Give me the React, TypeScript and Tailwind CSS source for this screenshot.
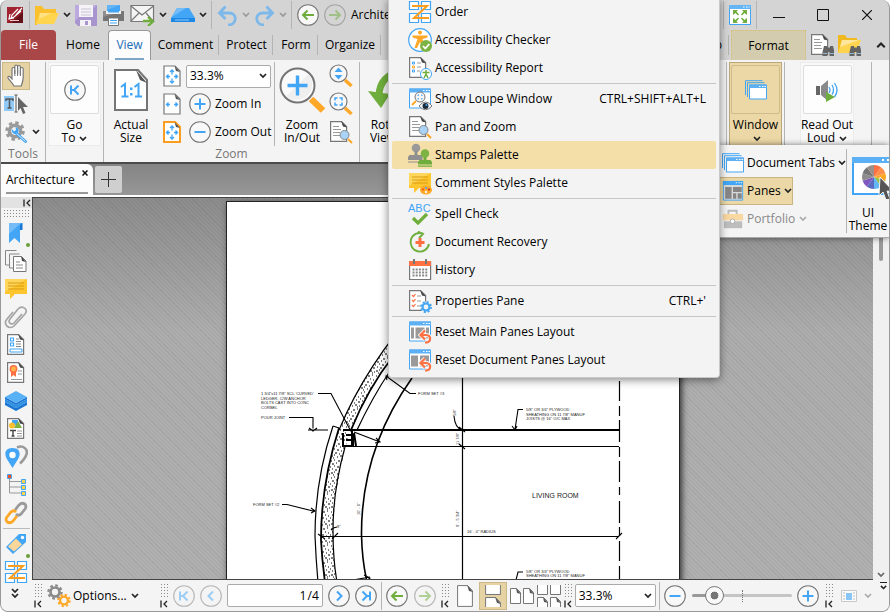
import React from 'react';

type IconProps = { className?: string };
type SvgProps = { className?: string; box?: string; children: React.ReactNode };

const BLUE = '#42a5f5';
const ORANGE = '#ffa726';
const GREEN = '#6fae3c';

function Svg({ className = 'size-6', box = '0 0 24 24', children }: SvgProps) {
    return (
        <svg viewBox={box} className={`block shrink-0 ${className}`} fill="none" aria-hidden="true">
            {children}
        </svg>
    );
}

/* ---------- small glyphs ---------- */

function Chevron({ className = 'w-2 text-[#222]' }: IconProps) {
    return (
        <Svg className={className} box="0 0 8 6">
            <path d="M1 1l3 3 3-3" stroke="currentColor" strokeWidth="1.7" />
        </Svg>
    );
}

function Collapse({ className = 'w-2' }: IconProps) {
    return (
        <Svg className={className} box="0 0 8 8">
            <path d="M1 0.5v7M7 1L4 4l3 3" stroke="#222" strokeWidth="1.3" />
        </Svg>
    );
}

function Grip() {
    return (
        <div className="flex h-full w-[10px] shrink-0 flex-col justify-between pt-[3px] pb-[3px]">
            <div className="h-[15px] w-[9px] bg-[radial-gradient(circle,#8a8a8a_0.7px,transparent_1px)] bg-[length:3px_3px]" />
            <Collapse />
        </div>
    );
}

type CircleProps = { kind: 'left' | 'right' | 'first' | 'prev' | 'next' | 'last' | 'plus' | 'minus'; color: string; faded?: boolean };

const circlePaths = {
    left: 'M17 11H6M10.500 6.500L6 11l4.500 4.500',
    right: 'M5 11h11M11.500 6.500L16 11l-4.500 4.500',
    first: 'M7 6.500v9M14.500 6.500L10 11l4.500 4.500M10 11H7',
    prev: 'M13 6.500L8.500 11l4.500 4.500',
    next: 'M9 6.500l4.500 4.500L9 15.500',
    last: 'M15 6.500v9M7.500 6.500L12 11l-4.500 4.500M12 11h3',
    plus: 'M11 5.500v11M5.500 11h11',
    minus: 'M5.500 11h11',
};

function Circle({ kind, color, faded }: CircleProps) {
    return (
        <Svg className="size-[22px]" box="0 0 22 22">
            <g opacity={faded ? 0.5 : 1}>
                <circle cx="11" cy="11" r="10.300" fill={faded ? 'none' : '#f8f8f8'} stroke="#777" strokeWidth="1.100" />
                <path d={circlePaths[kind]} stroke={color} strokeWidth="2" />
            </g>
        </Svg>
    );
}

/* ---------- title bar icons ---------- */

function LogoIcon() {
    return (
        <Svg className="size-[18px]" box="0 0 18 18">
            <path d="M1 1h16v16H1z" fill="#8e1a25" />
            <path d="M1 1h16L1 17z" fill="#a32431" />
            <path d="M17 6v11H6z" fill="#641018" />
            <path d="M16 2l-6 7M15 5l-7 6-3 1 1-3 6-6M4 8l-1 5 5-1" stroke="#fff" strokeWidth="1.200" />
            <path d="M4 14.500h9" stroke="#e8c6ca" />
        </Svg>
    );
}

function FolderIcon({ className = 'h-[22px] w-6' }: IconProps) {
    return (
        <Svg className={className} box="0 0 24 22">
            <path d="M0 2h7l2 3h12v4H6L2 21H0z" fill="#fbc02d" />
            <path d="M5 9h19l-5 11H1z" fill="#ffd54f" />
            <path d="M5 9h12L4 15z" fill="#ffe082" />
        </Svg>
    );
}

function SaveIcon() {
    return (
        <Svg className="size-[22px]" box="0 0 22 22">
            <path d="M0 1h22v21H3l-3-3z" fill="#a894cf" />
            <path d="M0 1h4v12L0 17zM18 1h4l-4 4z" fill="#bcaadf" />
            <path d="M4 1h14v12H4z" fill="#f5f3f8" />
            <path d="M6 5h10M6 8h10M6 11h10" stroke="#c9c4d4" />
            <path d="M5 16h11v6H5z" fill="#f3f1f6" />
            <path d="M10 17h3v4h-3z" fill="#a894cf" />
        </Svg>
    );
}

function PrintIcon() {
    return (
        <Svg className="h-[22px] w-[23px]" box="0 0 23 22">
            <path d="M5 1h13v6H5z" fill="#42a5f5" />
            <path d="M5 1h13L5 6z" fill="#64b5f6" />
            <path d="M1 7h21v10H1z" fill="#757575" />
            <path d="M1 7h21L1 13z" fill="#8e8e8e" />
            <path d="M4 7h15v3H4z" fill="#f2f2f2" />
            <path d="M6 7h11v1.500H6z" fill="#42a5f5" />
            <path d="M6.500 14h10v7.500h-10z" fill="#fff" stroke="#777" />
            <path d="M8 16.500h7M8 19h7" stroke={BLUE} />
        </Svg>
    );
}

function MailIcon() {
    return (
        <Svg className="h-[22px] w-[25px]" box="0 0 25 22">
            <path d="M1 1.500h22.500v16H1z" fill="#f4f4f4" stroke="#777" strokeWidth="1.200" />
            <path d="M1 2l11 9 11.500-9M1 17l8-8M23 17l-7-8" stroke="#777" strokeWidth="1.200" />
            <path d="M13 17h8M18 13l5 4.500-5 4.500" stroke={GREEN} strokeWidth="2.300" />
        </Svg>
    );
}

function ScannerIcon() {
    return (
        <Svg className="h-[18px] w-[24px]" box="0 0 24 18">
            <path d="M6 2h12l6 10H0z" fill={BLUE} />
            <path d="M6 2h9L1 11z" fill="#73bcf8" />
            <path d="M0 12h24v4H0z" fill="#1e88e5" />
            <path d="M4 14h14" stroke="#90caf9" />
        </Svg>
    );
}

function UndoIcon({ flip }: { flip?: boolean }) {
    return (
        <Svg className={flip ? 'size-[21px] -scale-x-100' : 'size-[21px]'} box="0 0 21 21">
            <path d="M2 8h10c9 0 8 12-1 12M8.500 1.500L2.500 8l6 6" stroke="#7db8ea" strokeWidth="2.800" />
        </Svg>
    );
}

function FullScreenIcon() {
    return (
        <Svg className="h-5 w-[22px]" box="0 0 22 20">
            <path d="M.5 1h21v18.500H.5z" fill="#fff" stroke={BLUE} />
            <path d="M0 0h22v4H0z" fill="#64b5f6" />
            <path d="M14 2h1.500M17 2h1.500M19.500 2h1" stroke="#fff" />
            <path d="M4 5h5L7.500 6.500 10 9.500l-1 1-2.500-2.500L4 10zM18 5h-5l1.500 1.500-2.500 3 1 1 2.500-2.500L18 10zM4 18h5l-1.500-1.500 2.500-3-1-1L6.500 15 4 13zM18 18h-5l1.500-1.500-2.500-3 1-1 2.500 2.500 2.500-2z" fill={GREEN} />
        </Svg>
    );
}

/* ---------- shared parts ---------- */

function PageShape({ lines = true }: { lines?: boolean }) {
    return (
        <>
            <path d="M1.600 1.600h11l5 5v14.800h-16z" fill="#fff" stroke="#777" strokeWidth="1.200" />
            <path d="M12 1l6 6.500-4-1z" fill="#444" />
            {lines && <path d="M4 6.500h6M4 9.500h8M4 12.500h7M4 15.500h8" stroke="#999" />}
        </>
    );
}

function WindowShape() {
    return (
        <>
            <path d="M1.500 2h21v19h-21z" fill="#fff" stroke={BLUE} />
            <path d="M1 1.500h22v4H1z" fill="#5cb0f5" />
            <path d="M15 3.500h1.500M18 3.500h1.500M20.500 3.500H22" stroke="#fff" />
        </>
    );
}

function Lens({ big }: { big?: boolean }) {
    if (big) {
        return (
            <>
                <circle cx="9.500" cy="9.500" r="8.500" fill="#f8f8f8" stroke="#777" strokeWidth="1.200" />
                <path d="M16 16l6.500 6" stroke={ORANGE} strokeWidth="3.400" />
            </>
        );
    }
    return (
        <>
            <circle cx="15.500" cy="15" r="4.500" fill="#a9d4f7" stroke="#888" />
            <path d="M19 19l4 4" stroke={ORANGE} strokeWidth="2" />
        </>
    );
}

function Gear({ x, y, r, color }: { x: number; y: number; r: number; color: string }) {
    return (
        <g transform={`translate(${x} ${y})`}>
            <circle r={r * 0.6} stroke={color} strokeWidth={r * 0.36} />
            <circle r={r * 0.88} stroke={color} strokeWidth={r * 0.3} strokeDasharray={`${r * 0.36} ${r * 0.331}`} />
        </g>
    );
}

function Binoculars() {
    return (
        <g>
            <path d="M14 13h3v1.500h3V13h3l1.500 6v4h-5v-4h-2v4h-5v-4z" fill="#636363" />
            <path d="M13 20.500h4M20 20.500h4" stroke="#8fb8d8" />
        </g>
    );
}

/* ---------- ribbon icons ---------- */

function HandIcon() {
    return (
        <Svg>
            <path d="M8 22c-2-4-5-6-6-8-.5-2 1.500-2.500 3 0l1 1V5c0-2 2.800-2 2.800 0v5V2.500c0-2 2.800-2 2.800 0V10 3c0-2 2.800-2 2.800 0v8-6c0-2 2.800-2 2.800 0v8c0 4-1 6-2 9z" transform="translate(2)" fill="#fff" stroke="#777" strokeWidth="1.200" />
            <path d="M10.800 6v6M13.600 4v8M16.400 6v6" stroke="#777" />
        </Svg>
    );
}

function TextSelectIcon() {
    return (
        <Svg>
            <path d="M0 4h10v15H0z" fill="#90caf9" />
            <path d="M2 7h7M5.500 7v9M3.500 16h4M2 6.500V9M9 6.500V9" stroke="#555" strokeWidth="1.500" />
            <path d="M12 3v17M10.500 3h3M10.500 20h3" stroke="#555" />
            <path d="M14 5l10 10h-5l2.500 6-2.500 1-2.500-6-2.500 3z" fill="#666" />
        </Svg>
    );
}

function ToolsIcon() {
    return (
        <Svg>
            <Gear x={10} y={11} r={9.5} color="#9a9a9a" />
            <path d="M11 13l9.500 8.500" stroke={BLUE} strokeWidth="3" strokeLinecap="round" />
            <path d="M11 13l9.500 8.500" stroke="#dceefd" />
            <path d="M7 9a3.500 3.500 0 103.500-2L11 10l-2 1.500z" fill={BLUE} />
        </Svg>
    );
}

function ActualSizeIcon() {
    return (
        <Svg className="h-[42px] w-[34px]" box="0 0 34 42">
            <path d="M1 1h23l9 10v30H1z" fill="#fff" stroke="#757575" strokeWidth="2" />
            <path d="M22 1l11 13-7-3z" fill="#555" />
            <path d="M7 18l4-3v12.500M7.500 27.500h7M20.500 18l4-3v12.500M21 27.500h7" stroke={BLUE} strokeWidth="2" />
            <path d="M16 18.500h2.500V21H16zM16 24h2.500v2.500H16z" fill={BLUE} />
        </Svg>
    );
}

function FitIcon({ kind }: { kind: 'page' | 'width' | 'visible' }) {
    const visible = kind === 'visible';
    return (
        <Svg className="h-[22px] w-[18px]" box="0 0 18 22">
            <path d="M1 1h11l5 5v15H1z" fill="#fff" stroke={visible ? '#fb9d1e' : '#777'} strokeWidth={visible ? 2 : 1.2} />
            <path d="M11.500 1L17 7l-4-1z" fill="#555" />
            <path d="M7 11.500H3M5.500 9.500l-2 2 2 2M11 11.500h4M12.500 9.500l2 2-2 2" stroke={BLUE} strokeWidth="1.300" />
            {kind !== 'width' && <path d="M9 9.500v-4M7 7l2-2 2 2M9 13.500v4M7 16l2 2 2-2" stroke={BLUE} strokeWidth="1.300" />}
        </Svg>
    );
}

function ZoomBigIcon() {
    return (
        <Svg className="size-[46px]" box="0 0 46 46">
            <circle cx="18.500" cy="18.500" r="17" fill="#fafafa" stroke="#757575" strokeWidth="2" />
            <path d="M7 29.500A16 16 0 0029.500 7z" fill="#efefef" />
            <path d="M18.500 8.500v20M8.500 18.500h20" stroke={BLUE} strokeWidth="3.400" />
            <path d="M32 32l12 11.500" stroke={ORANGE} strokeWidth="6.500" />
        </Svg>
    );
}

function ZoomUpDownIcon() {
    return (
        <Svg>
            <Lens big />
            <path d="M9.500 3.500l4 4.500h-8zM9.500 15.500l4-4.500h-8z" fill={BLUE} />
        </Svg>
    );
}

function ZoomAreaIcon() {
    return (
        <Svg>
            <Lens big />
            <path d="M6 8.500V6h2.500M10.500 6H13v2.500M13 10.500V13h-2.500M8.500 13H6v-2.500" stroke={BLUE} strokeWidth="1.500" />
        </Svg>
    );
}

function PanZoomIcon() {
    return (
        <Svg>
            <PageShape />
            <Lens />
        </Svg>
    );
}

function RotateIcon() {
    return (
        <Svg className="h-[46px] w-[44px]" box="0 0 44 46">
            <path d="M12 29C12 15 21 6 34 5" stroke={GREEN} strokeWidth="7" />
            <path d="M1 24l22 3-9 14z" fill={GREEN} />
        </Svg>
    );
}

function WindowsIcon() {
    return (
        <Svg className="size-[22px]" box="0 0 22 20">
            <path d="M.5 15V.7h17M2.500 17V2.700h17" stroke={BLUE} />
            <path d="M4.500 5h17v14h-17z" fill="#fff" stroke={BLUE} />
            <path d="M4 4.500h18V8H4z" fill="#5cb0f5" />
            <path d="M14 6.500h1.500M17 6.500h1.500M19.500 6.500H21" stroke="#fff" />
        </Svg>
    );
}

function SpeakerIcon() {
    return (
        <Svg>
            <path d="M1 8h4v9H1z" fill="#666" />
            <path d="M6 8l7-6v21l-7-6z" fill="#8a8a8a" />
            <path d="M14 9q2 3 0 6M17 7q3 5 0 9.500M19.500 5q5 7.500 0 14" stroke={BLUE} strokeWidth="1.300" />
            <path d="M11 14l9 5-9 5z" fill={GREEN} />
        </Svg>
    );
}

function FindDocIcon() {
    return (
        <Svg>
            <PageShape />
            <Binoculars />
        </Svg>
    );
}

function FindFolderIcon() {
    return (
        <Svg>
            <path d="M1 2h7l2 3h10v4H6L2 20H1z" fill="#f0b91f" />
            <path d="M5 7h19l-5 13H1z" fill="#ffd54f" />
            <path d="M5 7h17L3 14z" fill="#ffe69a" />
            <Binoculars />
        </Svg>
    );
}

function PanesIcon() {
    return (
        <Svg className="size-[22px]">
            <path d="M1.500 2h21v20h-21z" fill="#d9d9d9" stroke={BLUE} />
            <path d="M1 1h22v4.500H1z" fill={BLUE} />
            <path d="M15 3h1.500M18 3h1.500M20.500 3H22" stroke="#fff" />
            <path d="M3.500 7.500h7v13h-7zM12 7.500h9.500v5.500H12zM12 14.500h3.500v6H12zM17 14.500h4.500v6H17z" fill="#858585" />
        </Svg>
    );
}

function PortfolioIcon() {
    return (
        <Svg className="size-[22px]">
            <path d="M7 7V3h9v4" stroke="#bbb" strokeWidth="2" />
            <path d="M1 6.500h22V14H1z" fill="#f9d8a2" />
            <path d="M2 14h20v8H2z" fill="#bdbdbd" />
            <path d="M1 14h22" stroke="#f5f5f5" />
            <circle cx="11.500" cy="14.500" r="2.500" fill="#fff" stroke="#aaa" />
        </Svg>
    );
}

function ThemeIcon() {
    const wedges = ['#ff7043', '#ff8f4a', '#ffa726', '#8bc34a', '#64b5f6', '#5c6bc0', '#7e57c2', '#8d8d8d', '#757575', '#9b8f8a'];
    return (
        <Svg className="h-[42px] w-11" box="0 0 44 42">
            <path d="M1 1h44v36H1z" fill="#fff" stroke={BLUE} strokeWidth="2" />
            <path d="M0 0h44v6H0z" fill="#5cb0f5" />
            <path d="M30 3h2M35 3h2M40 3h2" stroke="#fff" strokeWidth="2" />
            {wedges.map((color, i) => (
                <path key={color} d="M22 20V8a12 12 0 017.100 2.300z" fill={color} transform={`rotate(${i * 36} 22 20)`} />
            ))}
            <path d="M28 20l14 15-7-1 3 8-4 1-3-8-4 4z" fill="#555" stroke="#f5f5f5" />
        </Svg>
    );
}

/* ---------- menu and side bar icons ---------- */

function OrderIcon() {
    return (
        <Svg>
            <path d="M1.500 1.500h9v8h-9zM13.500 1.500h9v8h-9zM1.500 13.500h9v9h-9zM13.500 13.500h9v9h-9z" fill="#fff" stroke={BLUE} strokeWidth="1.200" />
            <path d="M4 6h15L6 18h15" stroke="#fb9d1e" strokeWidth="2" />
        </Svg>
    );
}

function AccessCheckIcon() {
    return (
        <Svg>
            <circle cx="12" cy="12" r="11.300" fill="#fff" stroke={BLUE} strokeWidth="1.200" />
            <circle cx="12" cy="4.500" r="2" fill={ORANGE} />
            <path d="M4.500 7.500h15v2l-5 1.500 3 9H15L12 14l-3 6H6.500l3-9-5-1.500z" fill={ORANGE} />
            <circle cx="18" cy="18" r="6" fill="#7cb342" />
            <path d="M15 18l2.300 2.500 4-4.500" stroke="#fff" strokeWidth="1.800" />
        </Svg>
    );
}

function AccessReportIcon() {
    return (
        <Svg>
            <PageShape lines={false} />
            <path d="M4.500 6h2v2h-2zM4.500 14h2v2h-2z" stroke={BLUE} />
            <path d="M4.500 10h2v2h-2z" stroke={ORANGE} />
            <path d="M9 7h4M9 11h4M9 15h3" stroke="#999" />
            <circle cx="18" cy="18" r="5.500" fill="#fff" stroke={BLUE} />
            <path d="M14.500 16.500h7M18 14v5M18 18l-2 4M18 18l2 4" stroke={GREEN} strokeWidth="1.500" />
        </Svg>
    );
}

function LoupeIcon() {
    return (
        <Svg>
            <WindowShape />
            <circle cx="12" cy="10" r="5" fill="#f5f5f5" stroke="#777" />
            <path d="M10 9V8h1M13 8h1v1M14 11v1h-1M11 12h-1v-1" stroke={BLUE} />
            <path d="M8 14l-4 4" stroke={ORANGE} strokeWidth="2" />
            <path d="M11 19q6.500-8 13 0-6.500 7.500-13 0z" fill="#fff" stroke="#777" />
            <circle cx="17.500" cy="19" r="3" fill="#1b2a3a" />
            <circle cx="18.500" cy="18" r="1" fill={BLUE} />
        </Svg>
    );
}

function StampsIcon() {
    return (
        <Svg>
            <circle cx="8" cy="5" r="4.300" fill="#999" />
            <path d="M6.500 8h3v4h5v5H0v-3l1.500-2h5zM0 18.500h13v1H0z" fill="#909090" />
            <circle cx="17" cy="10.500" r="4.300" fill="#7cb342" />
            <path d="M15.500 14h3v3h4l1.500 2v2.500H10V19l1.500-2h4zM10 22.500h14v1.200H10z" fill="#6fae3c" />
        </Svg>
    );
}

function CommentIcon({ palette }: { palette?: boolean }) {
    return (
        <Svg>
            <path d="M1 2h22v15H11l-5 5v-5H1z" fill="#fdc52e" />
            <path d="M1 2h22L1 15z" fill="#ffd65c" />
            <path d="M4 6h16M4 9h16M4 12h16" stroke="#d99b13" />
            {palette && (
                <>
                    <ellipse cx="18" cy="19" rx="6" ry="4.500" fill={ORANGE} />
                    <circle cx="15" cy="18.500" r="1.100" fill="#f4511e" />
                    <circle cx="18" cy="17" r="1.100" fill={BLUE} />
                    <circle cx="21" cy="18.500" r="1.100" fill="#c62828" />
                    <circle cx="18" cy="21" r="1.200" fill="#f3f3f3" />
                </>
            )}
        </Svg>
    );
}

function SpellIcon() {
    return (
        <Svg>
            <text x="0" y="10" fontSize="11" fill={BLUE} fontFamily="Liberation Sans, Arial, sans-serif">ABC</text>
            <path d="M5 16l5 5 9-9" stroke={GREEN} strokeWidth="3.200" />
        </Svg>
    );
}

function RecoveryIcon() {
    return (
        <Svg>
            <path d="M15 3.500A9.300 9.300 0 1021 14M10 1.500L15 4l-4 4" stroke={GREEN} strokeWidth="1.900" />
            <path d="M12 8v9M7.500 12.500h9" stroke="#ff6e40" strokeWidth="3" />
        </Svg>
    );
}

function HistoryIcon() {
    return (
        <Svg>
            <path d="M1.600 4h21v17.500h-21z" fill="#fff" stroke="#777" strokeWidth="1.200" />
            <path d="M1 3h22v5H1z" fill="#ff7043" />
            <path d="M6 1v5M18 1v5" stroke="#777" strokeWidth="2" />
            <path d="M4.500 11.500h15M4.500 14.500h15M4.500 17.500h15" stroke="#888" strokeWidth="1.800" strokeDasharray="2 1.200" />
        </Svg>
    );
}

function PropertiesIcon() {
    return (
        <Svg>
            <PageShape lines={false} />
            <path d="M4 6l1.500 1.500L7.500 5M4 11l1.500 1.500L7.500 10M4 16l1.500 1.500L7.500 15" stroke="#ff7043" strokeWidth="1.200" />
            <path d="M9 7h4M9 12h4M9 17h3" stroke="#999" />
            <circle cx="18" cy="18" r="5.500" fill="#f3f3f3" />
            <Gear x={18} y={18} r={5.8} color={BLUE} />
        </Svg>
    );
}

function ResetIcon({ wide }: { wide?: boolean }) {
    return (
        <Svg>
            <WindowShape />
            <path d={wide ? 'M3 7.500h7v11H3zM12 7.500h9v11h-9z' : 'M3 7.500h3v11H3zM7.500 7.500h9v11h-9zM18 7.500h3v11h-3z'} fill="#9a9a9a" />
            <path d="M13 15h5c6 0 5 7.500 0 7.500h-1M17 10.500L12.500 15l4.500 4.500" stroke="#f3f3f3" strokeWidth="4" />
            <path d="M13 15h5c6 0 5 7.500 0 7.500h-1M17 10.500L12.500 15l4.500 4.500" stroke="#ff7043" strokeWidth="2.200" />
        </Svg>
    );
}

function BookmarkIcon() {
    return (
        <Svg>
            <path d="M15 2h3.500v7H15z" fill="#1976d2" />
            <path d="M5 2h13l-2 2v18l-5.500-5L5 22z" fill={BLUE} />
            <path d="M5 2h12L5 13z" fill="#73bcf8" />
        </Svg>
    );
}

function PagesIcon() {
    return (
        <Svg>
            <path d="M1.500 16V1.500h11M1.500 16H5M5.500 19V5h10M5.500 19H9" stroke="#888" />
            <path d="M9.500 7.500h8l4.500 4.500v10.500H9.500z" fill="#fff" stroke="#777" />
            <path d="M17 7l5 6-4-1z" fill="#444" />
            <path d="M12 13h4M12 16h7M12 19h7" stroke="#888" />
        </Svg>
    );
}

function ClipIcon() {
    return (
        <Svg>
            <path d="M9 7l-6 7c-5 6 3 11 7 7L21 9c4-5-3-9-7-5L6 14c-3 4 2 6 4 4l8-9" stroke="#a5a5a5" strokeWidth="1.700" />
        </Svg>
    );
}

function FieldsIcon() {
    return (
        <Svg>
            <g transform="translate(2)">
                <PageShape lines={false} />
                <path d="M4.500 5h3v3h-3zM4.500 10h3v3h-3z" stroke={BLUE} strokeWidth="1.200" />
                <path d="M10 6h3M10 8.500h5M10 11h5M10 13.500h5" stroke="#888" />
                <path d="M4 16h12v3H4z" stroke={BLUE} />
            </g>
        </Svg>
    );
}

function CertIcon() {
    return (
        <Svg>
            <g transform="translate(2)">
                <PageShape lines={false} />
                <path d="M5 9h5v7l-2.500-2L5 16z" fill="#ff7043" />
                <circle cx="7.500" cy="8" r="3.200" fill="#ffb74d" stroke="#ff7043" strokeWidth="1.500" />
                <path d="M12 10h4M12 13h4M5 18.500h11" stroke="#999" />
            </g>
        </Svg>
    );
}

function LayersIcon() {
    return (
        <Svg>
            <path d="M1 13l11 6 11-6v3l-11 6-11-6z" fill="#1976d2" />
            <path d="M1 10l11 6 11-6v3l-11 6-11-6z" fill="#2f8fe2" />
            <path d="M1 8l11 6 11-6v2l-11 6-11-6z" fill="#1976d2" />
            <path d="M12 2l11 6-11 6L1 8z" fill="#58b0f5" />
        </Svg>
    );
}

function ContentIcon() {
    return (
        <Svg>
            <g transform="translate(2)">
                <PageShape lines={false} />
                <path d="M6 3h6v5H6z" fill={BLUE} />
                <circle cx="6" cy="8.500" r="3" fill="#fbc02d" />
                <path d="M12 4l4 7H8z" fill="#7cb342" />
                <path d="M4 13.500h6M7 13.500V19M5.500 19h3" stroke="#444" strokeWidth="1.400" />
                <path d="M11 14h5M11 16.500h5M11 19h5" stroke="#999" />
            </g>
        </Svg>
    );
}

function PinsIcon() {
    return (
        <Svg>
            <path d="M13 2.500c6-3 12 2 9 8-1 3-4 6-6 8" stroke="#9a9a9a" strokeWidth="2.600" />
            <path d="M8.500 3c9 0 8 8 5 12l-5 8-5-8C.5 11-.5 3 8.500 3z" fill={BLUE} />
            <circle cx="8.500" cy="10" r="3.200" fill="#fff" />
        </Svg>
    );
}

function TreeIcon() {
    return (
        <Svg>
            <path d="M5.500 5v15H17M5.500 8.500H17M5.500 14H17" stroke="#999" />
            <path d="M3.500 1.500h4v4h-4z" fill="#f4511e" stroke={BLUE} />
            <path d="M17.500 6.500h4v4h-4zM17.500 12.500h4v4h-4zM17.500 18.500h4v4h-4z" fill="#ffd54f" stroke={BLUE} />
        </Svg>
    );
}

function LinkIcon() {
    return (
        <Svg>
            <path d="M11 9l4-5c4-4 9 0 6 4l-4 5c-2 2-4 1-5 0" stroke="#9a9a9a" strokeWidth="2.800" />
            <path d="M13 15l-4 5c-4 4-9 0-6-4l4-5c2-2 4-1 5 0" stroke={ORANGE} strokeWidth="2.800" />
        </Svg>
    );
}

function TagIcon() {
    return (
        <Svg>
            <path d="M15 2h7v8L9 22 2 15z" fill={BLUE} />
            <path d="M12 6.500l6 6-8 7-6-5z" fill="#ffd79b" />
            <circle cx="18.500" cy="5.500" r="1.700" fill="#fff" />
        </Svg>
    );
}

function GearsIcon() {
    return (
        <Svg>
            <Gear x={8} y={8} r={7.5} color="#8a8a8a" />
            <Gear x={17} y={16.5} r={6.5} color={ORANGE} />
        </Svg>
    );
}

/* ---------- data ---------- */

type MenuItem = { label: string; icon: React.ReactNode; keys?: string; active?: boolean };

const menuGroups: MenuItem[][] = [
    [
        { label: 'Order', icon: <OrderIcon /> },
        { label: 'Accessibility Checker', icon: <AccessCheckIcon /> },
        { label: 'Accessibility Report', icon: <AccessReportIcon /> },
    ],
    [
        { label: 'Show Loupe Window', icon: <LoupeIcon />, keys: 'CTRL+SHIFT+ALT+L' },
        { label: 'Pan and Zoom', icon: <PanZoomIcon /> },
        { label: 'Stamps Palette', icon: <StampsIcon />, active: true },
        { label: 'Comment Styles Palette', icon: <CommentIcon palette /> },
    ],
    [
        { label: 'Spell Check', icon: <SpellIcon /> },
        { label: 'Document Recovery', icon: <RecoveryIcon /> },
        { label: 'History', icon: <HistoryIcon /> },
    ],
    [{ label: 'Properties Pane', icon: <PropertiesIcon />, keys: "CTRL+'" }],
    [
        { label: 'Reset Main Panes Layout', icon: <ResetIcon /> },
        { label: 'Reset Document Panes Layout', icon: <ResetIcon wide /> },
    ],
];

const sidePanes = [
    { label: 'Bookmarks', icon: <BookmarkIcon />, dot: true },
    { label: 'Thumbnails', icon: <PagesIcon /> },
    { label: 'Comments', icon: <CommentIcon /> },
    { label: 'Attachments', icon: <ClipIcon /> },
    { label: 'Fields', icon: <FieldsIcon /> },
    { label: 'Signatures', icon: <CertIcon /> },
    { label: 'Layers', icon: <LayersIcon /> },
    { label: 'Content', icon: <ContentIcon /> },
    { label: 'Destinations', icon: <PinsIcon /> },
    { label: 'Structure', icon: <TreeIcon /> },
    { label: 'Links', icon: <LinkIcon /> },
];

const ribbonTabs = [
    { label: 'Comment', width: 'w-[68px]' },
    { label: 'Protect', width: 'w-[54px]' },
    { label: 'Form', width: 'w-[45px]' },
    { label: 'Organize', width: 'w-[63px]' },
];

/* ---------- page parts ---------- */

function Sep({ className = 'h-7' }: IconProps) {
    return <div className={`w-px shrink-0 bg-[#b4b4b4] ${className}`} />;
}

function TitleBar() {
    return (
        <header className="flex h-[30px] shrink-0 items-center">
            <div className="flex items-center gap-[5px] pl-[5px]">
                <LogoIcon />
                <Sep />
                <button aria-label="Open"><FolderIcon /></button>
                <Chevron className="-mx-px w-2 text-[#222]" />
                <button aria-label="Save"><SaveIcon /></button>
                <button aria-label="Print"><PrintIcon /></button>
                <button aria-label="Email"><MailIcon /></button>
                <Chevron className="-mx-px w-2 text-[#222]" />
                <button aria-label="Scan"><ScannerIcon /></button>
                <Chevron className="-mx-px w-2 text-[#222]" />
                <Sep />
                <button aria-label="Undo"><UndoIcon /></button>
                <Chevron className="-mx-px w-2 text-[#999]" />
                <button aria-label="Redo"><UndoIcon flip /></button>
                <Chevron className="-mx-px w-2 text-[#999]" />
                <Sep />
                <button aria-label="Back"><Circle kind="left" color={GREEN} /></button>
                <button aria-label="Forward"><Circle kind="right" color={GREEN} faded /></button>
                <span>Architecture</span>
            </div>
            <div className="ml-auto flex items-center">
                <Chevron className="mr-[3px] w-2 text-[#222]" />
                <Sep />
                <button className="px-[5px]" aria-label="Full screen"><FullScreenIcon /></button>
                <Sep />
                <button className="flex h-7 w-11 items-center justify-center" aria-label="Minimize">
                    <Svg className="size-3" box="0 0 12 12"><path d="M0 8.500h12" stroke="#111" /></Svg>
                </button>
                <button className="flex h-7 w-11 items-center justify-center" aria-label="Maximize">
                    <Svg className="size-3" box="0 0 12 12"><path d="M.5.5h11v11H.5z" stroke="#111" /></Svg>
                </button>
                <button className="flex h-7 w-11 items-center justify-center" aria-label="Close">
                    <Svg className="size-[10px]" box="0 0 10 10"><path d="M0 0l10 10M10 0L0 10" stroke="#111" strokeWidth="1.200" /></Svg>
                </button>
            </div>
        </header>
    );
}

function TabBar() {
    return (
        <nav className="flex h-[30px] shrink-0 items-stretch">
            <button className="w-[55px] rounded-t bg-[#a94648] text-white">File</button>
            <button className="w-[52px] pl-[2px]">Home</button>
            <button className="w-[43px] rounded-t border border-b-0 border-[#999] bg-[#fcfcfc] px-[6px] text-[#1a6fb8]">
                <span className="flex h-full items-center justify-center border-b-2 border-[#7fa6c4]">View</span>
            </button>
            {ribbonTabs.map((tab) => (
                <div key={tab.label} className={`flex items-center ${tab.width}`}>
                    <button className="flex-1 pl-[2px] text-center">{tab.label}</button>
                    {tab.label !== 'Comment' || <Sep className="h-5" />}
                    {tab.label === 'Comment' || <Sep className="h-5" />}
                </div>
            ))}
            <div className="ml-auto flex items-center">
                <button className="pr-[6px]">Help</button>
                <Sep className="mr-[2px] h-5" />
                <button className="h-full w-[75px] border-x border-t border-dotted border-[#d8bd6e] bg-[#d3ccae]">Format</button>
                <button className="ml-[3px] w-7 pl-[1px]" aria-label="Find in document"><FindDocIcon /></button>
                <button className="w-7" aria-label="Find in folder"><FindFolderIcon /></button>
                <button className="w-6 pl-[11px]" aria-label="Collapse ribbon">
                    <Chevron className="w-[10px] rotate-180 text-[#222]" />
                </button>
            </div>
        </nav>
    );
}

type BigProps = { label: React.ReactNode; icon: React.ReactNode; className: string; framed?: boolean; on?: boolean };

function BigButton({ label, icon, className, framed, on }: BigProps) {
    const look = on ? 'border-[#b9a67a] bg-[#ecd8a6]' : framed ? 'border-[#ececec] bg-[#f9f9f9]' : 'border-transparent';
    const frame = on ? 'border border-[#d0bc8a]' : framed ? 'border border-[#ddd] bg-[#fdfdfd]' : '';
    return (
        <button className={`flex h-[84px] shrink-0 flex-col items-center border ${look} ${className}`}>
            <span className={`mt-[2px] mb-1 flex h-[49px] w-[49px] shrink-0 items-center justify-center rounded-xs ${frame}`}>{icon}</span>
            <span className="leading-[13px] whitespace-nowrap">{label}</span>
        </button>
    );
}

function InlineArrow() {
    return <Chevron className="ml-1 inline-block w-2 text-[#222]" />;
}

function SelectBox({ label, className }: { label: string; className: string }) {
    return (
        <div className={`relative flex items-center ${className}`}>
            <select aria-label={label} defaultValue="33.3%" className="h-full w-full appearance-none rounded-xs border border-[#aaa] bg-white pl-[3px] text-xs">
                <option>33.3%</option>
                <option>100%</option>
            </select>
            <div className="pointer-events-none absolute right-1"><Chevron /></div>
        </div>
    );
}

function Ribbon() {
    return (
        <div className="flex h-[102px] shrink-0 bg-[#f4f4f4] pt-[2px]">
            <section className="flex w-11 flex-col">
                <button className="ml-px flex size-7 items-center justify-center border border-[#cdb988] bg-[#e6d3a3]" aria-label="Hand"><HandIcon /></button>
                <button className="ml-[3px] flex h-7 items-center" aria-label="Select text"><TextSelectIcon /></button>
                <button className="ml-1 flex h-7 items-center gap-[3px]" aria-label="Other tools">
                    <ToolsIcon />
                    <Chevron />
                </button>
                <h2 className="text-center text-[#777]">Tools</h2>
            </section>
            <Sep className="h-full" />
            <BigButton label={<>Go<br />To<InlineArrow /></>} framed className="mx-[2px] w-[53px]" icon={<Circle kind="first" color={BLUE} />} />
            <Sep className="h-full" />
            <section className="flex w-[255px] flex-col">
                <div className="flex h-[84px]">
                    <BigButton label={<>Actual<br />Size</>} className="w-[54px]" icon={<ActualSizeIcon />} />
                    <div className="flex w-7 flex-col items-center">
                        <button className="flex h-7 items-center" aria-label="Fit page"><FitIcon kind="page" /></button>
                        <button className="flex h-7 items-center" aria-label="Fit width"><FitIcon kind="width" /></button>
                        <button className="flex h-7 items-center" aria-label="Fit visible"><FitIcon kind="visible" /></button>
                    </div>
                    <div className="flex w-[88px] flex-col">
                        <div className="flex h-7 items-center"><SelectBox label="Zoom level" className="h-[23px] w-[85px]" /></div>
                        <button className="flex h-7 items-center gap-1 pl-[3px] whitespace-nowrap"><Circle kind="plus" color={BLUE} />Zoom In</button>
                        <button className="flex h-7 items-center gap-1 pl-[3px] whitespace-nowrap"><Circle kind="minus" color={BLUE} />Zoom Out</button>
                    </div>
                    <Sep className="h-full" />
                    <BigButton label={<>Zoom<br />In/Out</>} className="w-[54px]" icon={<ZoomBigIcon />} />
                    <div className="flex flex-col">
                        <button className="flex h-7 items-center" aria-label="Dynamic zoom"><ZoomUpDownIcon /></button>
                        <button className="flex h-7 items-center" aria-label="Marquee zoom"><ZoomAreaIcon /></button>
                        <button className="flex h-7 items-center" aria-label="Pan and zoom"><PanZoomIcon /></button>
                    </div>
                </div>
                <h2 className="text-center text-[#777]">Zoom</h2>
            </section>
            <Sep className="h-full" />
            <BigButton label={<>Rotate<br />View<InlineArrow /></>} className="w-[58px]" icon={<RotateIcon />} />
            <div className="ml-auto flex">
                <Sep className="h-full" />
                <BigButton label={<>Window<br /><InlineArrow /></>} framed on className="mx-[2px] w-[53px]" icon={<WindowsIcon />} />
                <Sep className="h-full" />
                <BigButton label={<>Read Out<br />Loud<InlineArrow /></>} framed className="mr-[17px] ml-[15px] w-[54px]" icon={<SpeakerIcon />} />
                <Sep className="h-full" />
                <div className="w-[17px]" />
            </div>
        </div>
    );
}

function DocumentTabs() {
    return (
        <div className="flex h-[35px] shrink-0 gap-[2px] border-t-2 border-b-2 border-t-[#4a4a4a] border-b-white bg-linear-to-b from-[#848484] to-[#979797]">
            <div className="relative flex w-[92px] flex-col justify-end rounded-tr-md bg-[#fcfcfc] px-[5px] pb-px">
                <a href="#architecture" className="pb-1 whitespace-nowrap">Architecture</a>
                <div className="h-[2px] bg-[#999]" />
                <button aria-label="Close tab" className="absolute top-[6px] right-[5px]">
                    <Svg className="size-[6px]" box="0 0 6 6"><path d="M.5.5l5 5M5.500.5l-5 5" stroke="#111" strokeWidth="1.500" /></Svg>
                </button>
            </div>
            <button aria-label="New tab" className="mt-[2px] flex h-[27px] w-[27px] items-center justify-center rounded-xs bg-[#cfcfcf]">
                <Svg className="size-[15px]" box="0 0 15 15"><path d="M7.500 0v15M0 7.500h15" stroke="#333" /></Svg>
            </button>
        </div>
    );
}

function SideBar() {
    return (
        <aside className="flex w-[31px] shrink-0 flex-col overflow-hidden bg-[#f4f4f4]">
            <div className="flex h-[11px] shrink-0 items-center justify-end bg-[#e2e2e2] pr-px"><Collapse /></div>
            <div className="mx-[2px] mt-px mb-px h-[9px] shrink-0 bg-[radial-gradient(circle,#8a8a8a_0.7px,transparent_1px)] bg-[length:3px_3px]" />
            {sidePanes.map((pane) => (
                <button key={pane.label} aria-label={pane.label} className="relative flex h-7 shrink-0 items-center pl-[3px]">
                    {pane.icon}
                    {pane.dot && <i className="absolute right-[2px] bottom-0 size-1 rounded-full bg-[#689f38]" />}
                </button>
            ))}
            <div className="mx-[2px] my-px h-px shrink-0 bg-[#bbb]" />
            <button aria-label="Properties" className="relative flex h-7 shrink-0 items-center pl-[3px]">
                <TagIcon />
                <i className="absolute right-[2px] bottom-0 size-1 rounded-full bg-[#689f38]" />
            </button>
            <button aria-label="Order" className="flex h-7 shrink-0 items-center pl-[3px]"><OrderIcon /></button>
            <button aria-label="More panes" className="flex flex-col items-center pt-[2px] pr-1">
                <Chevron className="w-2 text-[#222]" />
                <Chevron className="-mt-px w-2 text-[#222]" />
            </button>
        </aside>
    );
}

function Drawing() {
    return (
        <svg viewBox="227 202 452 384" className="block h-[384px] w-[452px]" fill="none" stroke="#000">
            <defs>
                <pattern id="concrete" width="15" height="17" patternUnits="userSpaceOnUse">
                    <path d="M1 2h1M4 1h1M8 2h2M12 1h1M2 5h2M6 4h1M10 5h1M13 6h1M0 8h1M4 7h1M7 8h2M11 9h1M2 10h1M5 11h2M9 12h1M13 11h2M1 14h2M4 13h1M7 15h1M10 14h2M14 15h1M3 16h1M12 16h1" stroke="#000" strokeWidth="1.200" />
                </pattern>
            </defs>
            <path d="M420 305Q366 365 339 430L351 430Q368 388 394 355Z" fill="url(#concrete)" stroke="none" />
            <path d="M339 428Q321 484 321 540Q322 560 325 582L337 582Q333 560 333 530Q335 485 349 434Z" fill="url(#concrete)" stroke="none" />
            <g strokeWidth="1.200">
                <path d="M420 305Q366 365 339 430" />
                <path d="M394 355Q368 388 351 430" strokeWidth="1.800" />
                <path d="M390 371Q372 398 357 430" />
                <path d="M333 426Q315 480 315 536Q316 560 318 582" />
                <path d="M339 428Q321 484 321 540Q322 560 325 582" strokeWidth="1.800" />
                <path d="M345 447Q333 490 333 530Q333 560 337 582" />
                <path d="M333 426l6 2" />
                <path d="M412 378Q361 450 361.500 535Q362 560 367 582" strokeWidth="1.600" />
            </g>
            <path d="M343 430h276" strokeWidth="2" />
            <path d="M343 446.500h276M321 536.500h298M462.500 360v226" strokeWidth="1.200" />
            <path d="M619.500 381v20M619.500 406v10M619.500 420v22M619.500 447v10M619.500 461v21M619.500 487v8M619.500 501v22M619.500 527v9M619.500 541v20M619.500 566v14" strokeWidth="1.200" />
            <g strokeWidth="1.100">
                <path d="M318 393.500h13l20 38M289 417.500h24v11M308 430h20M309 428l4 3 4-3" />
                <path d="M282 504.500h5l28 7M311 508l4 3-4 2" />
                <path d="M416 393.500h-6L386 376M390 376l-4 0 1 4" />
                <path d="M523 409.500h-5l-3 20M512 426l3 4 2-4M523 572h-5l-3 12" />
                <path d="M354 432l26 10M376 438l4 4-5 1M353 580l17-3M364 575l6 3-4 3" />
                <path d="M454 416q1 12 8 14M459 427l6 5M459 444l6 5M616 539l6-6M318 534l7 5M332 539l6-6M331 530q3-3 6-3" />
                <path d="M343 433v14M346 435h7v11h-9M346 440h7M352 430v17M354 433l2 13" strokeWidth="2" />
            </g>
            <g fill="#222" stroke="none" fontFamily="Liberation Sans, Arial, sans-serif" fontSize="4">
                <text x="261" y="395">1 3/4"x11 7/8" SCL 'CURVED'</text>
                <text x="261" y="400">LEDGER, C/W ANCHOR</text>
                <text x="261" y="404">BOLTS CAST INTO CONC</text>
                <text x="261" y="409">CORBEL</text>
                <text x="261" y="419">POUR JOINT</text>
                <text x="253" y="506">FORM SET #2</text>
                <text x="418" y="395">FORM SET #3</text>
                <text x="526" y="411">5/8" OR 3/4" PLYWOOD</text>
                <text x="526" y="416">SHEATHING ON 11 7/8" MANUF</text>
                <text x="526" y="420">JOISTS @ 16" O/C MAX</text>
                <text x="526" y="573">5/8" OR 3/4" PLYWOOD</text>
                <text x="526" y="577">SHEATHING ON 11 7/8" MANUF</text>
                <text x="467" y="533">16' - 0"  RADIUS</text>
                <text x="337" y="528">8"</text>
                <text x="532" y="498" fontSize="7">LIVING ROOM</text>
                <text transform="translate(360 515) rotate(-90)">10' - 0"</text>
                <text transform="translate(459 527) rotate(-90)">9' - 5 3/4"</text>
                <text transform="translate(459 445) rotate(-90)">11 7/8"</text>
                <text transform="translate(456 416) rotate(-90)">5/8"</text>
            </g>
        </svg>
    );
}

function Canvas() {
    return (
        <main className="flex min-h-0 flex-1">
            <div className="flex-1 overflow-hidden border-t border-b border-l border-[#444] bg-[repeating-linear-gradient(45deg,#0000000d_0_1px,transparent_1px_3px),linear-gradient(#8c8c8c,#adadad_35%,#b0b0b0)] pt-[3px]">
                <div className="mx-auto w-[454px] border border-[#222] bg-white shadow-[2px_2px_6px_#333]">
                    <Drawing />
                </div>
            </div>
            <div className="flex w-4 shrink-0 flex-col items-center justify-between bg-[#f0f0f0] pt-9 pb-[2px]">
                <div className="h-7 w-1 rounded-full bg-[#999]" />
                <Chevron className="w-2 text-[#666]" />
            </div>
        </main>
    );
}

function PageIcon({ kind }: { kind: 'single' | 'continuous' | 'facing' | 'quad' }) {
    if (kind === 'single') {
        return (
            <Svg className="h-[22px] w-4" box="0 0 16 22">
                <path d="M.6.600h10l4.800 5v15.800H.6z" fill="#fff" stroke="#777" />
                <path d="M10 0l6 7-4-1z" fill="#555" />
            </Svg>
        );
    }
    if (kind === 'continuous') {
        return (
            <Svg className="h-[22px] w-4" box="0 0 16 22">
                <path d="M.6 0v9.500h14.800V0M.6 22V12.500h10l4.800 5V22" fill="#fff" stroke="#777" />
                <path d="M10 12l6 7-4-1z" fill="#555" />
            </Svg>
        );
    }
    if (kind === 'facing') {
        return (
            <Svg className="h-4 w-6" box="0 0 24 16">
                <path d="M.5.5h6l4 4v11H.5zM13.500.5h6l4 4v11h-10z" fill="#fff" stroke="#777" />
                <path d="M6 0l5 6-4-1zM19 0l5 6-4-1z" fill="#555" />
            </Svg>
        );
    }
    return (
        <Svg className="h-[22px] w-6" box="0 0 24 22">
            <path d="M.5 0v9.500h10V0M13.500 0v9.500h10V0M.5 22v-9.500h6l4 4V22M13.500 22v-9.500h6l4 4V22" fill="#fff" stroke="#777" />
            <path d="M6 12l5 6-4-1zM19 12l5 6-4-1z" fill="#555" />
        </Svg>
    );
}

function StatusBar() {
    return (
        <footer className="flex h-[31px] shrink-0 items-center bg-[#f4f4f4] pl-[2px]">
            <Grip />
            <button className="ml-[3px] flex items-center gap-[2px]"><GearsIcon />Options...</button>
            <Chevron className="mr-[21px] ml-1 w-2 text-[#222]" />
            <Grip />
            <div className="ml-[3px] flex items-center gap-[5px]">
                <button aria-label="First page"><Circle kind="first" color={BLUE} faded /></button>
                <button aria-label="Previous page"><Circle kind="prev" color={BLUE} faded /></button>
                <label className="flex h-[23px] w-24 items-center rounded-xs border border-[#aaa] bg-white pr-[3px]">
                    <input aria-label="Page number" defaultValue="1" className="w-full min-w-0 text-right" />
                    <span className="pl-px">/4</span>
                </label>
                <button aria-label="Next page"><Circle kind="next" color={BLUE} /></button>
                <button aria-label="Last page"><Circle kind="last" color={BLUE} /></button>
            </div>
            <Sep className="mx-1 h-7" />
            <div className="mr-[5px] flex gap-[6px]">
                <button aria-label="Previous view"><Circle kind="left" color={GREEN} /></button>
                <button aria-label="Next view"><Circle kind="right" color={GREEN} faded /></button>
            </div>
            <Grip />
            <div className="mx-[3px] flex items-center gap-[3px]">
                <button aria-label="Single page" className="px-[3px]"><PageIcon kind="single" /></button>
                <button aria-label="Continuous" className="border border-[#cdb988] bg-[#e6d3a3] px-[5px] py-[2px]"><PageIcon kind="continuous" /></button>
                <button aria-label="Two pages"><PageIcon kind="facing" /></button>
                <button aria-label="Two pages continuous"><PageIcon kind="quad" /></button>
            </div>
            <Grip />
            <SelectBox label="Page zoom" className="ml-px h-[23px] w-[81px]" />
            <Sep className="mx-[3px] h-7" />
            <button aria-label="Zoom out" className="mx-px"><Circle kind="minus" color={BLUE} /></button>
            <div className="relative mx-[5px] flex w-[100px] items-center">
                <input
                    type="range"
                    aria-label="Zoom"
                    defaultValue="16"
                    className="h-[3px] w-full appearance-none rounded-full bg-[linear-gradient(90deg,#999_20%,#c4c4c4_20%)] [&::-webkit-slider-thumb]:size-[19px] [&::-webkit-slider-thumb]:appearance-none [&::-webkit-slider-thumb]:rounded-full [&::-webkit-slider-thumb]:border [&::-webkit-slider-thumb]:border-[#777] [&::-webkit-slider-thumb]:bg-[radial-gradient(#757575_30%,#f8f8f8_35%)]"
                />
                <div className="absolute left-1/2 h-3 border-l border-dotted border-[#777]" />
            </div>
            <button aria-label="Zoom in" className="mr-[6px]"><Circle kind="plus" color={BLUE} /></button>
            <Grip />
            <button aria-label="View mode" className="ml-[6px] opacity-60">
                <Svg className="h-3 w-4" box="0 0 16 12">
                    <path d="M.5.5h15v11H.5z" fill="#fff" stroke="#aaa" />
                    <path d="M5 3h6v7H5z" fill={BLUE} />
                    <path d="M2 3h2M2 6h2M2 9h2M12 3h2M12 6h2M12 9h2" stroke="#999" />
                </Svg>
            </button>
            <Chevron className="ml-[7px] w-2 text-[#aaa]" />
            <button aria-label="More" className="mt-[2px] mr-[2px] ml-auto self-start border-t border-[#222] pt-[2px]"><Chevron className="w-[7px] text-[#222]" /></button>
        </footer>
    );
}

function PanesMenu() {
    return (
        <div role="menu" className="absolute -top-[2px] left-[387px] z-20 w-[332px] rounded-b border border-t-0 border-[#c8c8c8] bg-[#f3f3f3] px-[3px] pb-[3px] shadow-[0_2px_8px_#0007]">
            {menuGroups.map((group, i) => (
                <div key={i} className={i > 0 ? 'mt-px border-t border-[#c6c6c6] pt-px' : ''}>
                    {group.map((item) => (
                        <button
                            key={item.label}
                            role="menuitem"
                            className={`flex h-7 w-full items-center gap-[3px] rounded-xs pr-[10px] pl-4 ${item.active ? 'bg-[#f5dfa8]' : ''}`}
                        >
                            {item.icon}
                            <span>{item.label}</span>
                            <span className="ml-auto">{item.keys}</span>
                        </button>
                    ))}
                </div>
            ))}
        </div>
    );
}

function WindowPanel() {
    return (
        <div className="absolute top-[145px] right-0 z-10 flex w-[171px] border-b border-[#aaa] bg-[#f4f4f4] pt-1 pb-1 shadow-[0_0_6px_#0008]">
            <div className="w-[128px] shrink-0">
                <button className="flex h-7 w-full items-center gap-[3px] pl-1 whitespace-nowrap">
                    <WindowsIcon />
                    Document Tabs
                    <Chevron className="w-2 text-[#222]" />
                </button>
                <button className="flex h-7 w-[75px] items-center gap-[3px] border border-[#c9b483] bg-[#ecd8a6] pl-[3px]">
                    <PanesIcon />
                    Panes
                    <Chevron className="w-2 text-[#222]" />
                </button>
                <button className="flex h-7 w-full items-center gap-[3px] pl-1 text-[#888]" disabled>
                    <PortfolioIcon />
                    Portfolio
                    <Chevron className="ml-px w-2 text-[#aaa]" />
                </button>
            </div>
            <Sep className="h-auto" />
            <button className="min-w-0 flex-1 overflow-hidden pt-[6px] leading-[13px]">
                <span className="block pl-[5px]"><ThemeIcon /></span>
                <span className="block pt-[7px]">UI<br />Theme</span>
            </button>
        </div>
    );
}

function App() {
    return (
        <div className="relative flex h-screen w-full flex-col overflow-hidden rounded-lg border-x border-b border-[#999] bg-[#d4d4d4] font-['Open_Sans','Noto_Sans',sans-serif] text-xs text-black">
            <TitleBar />
            <TabBar />
            <Ribbon />
            <DocumentTabs />
            <div className="flex min-h-0 flex-1">
                <SideBar />
                <div className="flex min-w-0 flex-1 flex-col">
                    <Canvas />
                    <StatusBar />
                </div>
            </div>
            <PanesMenu />
            <WindowPanel />
        </div>
    );
}

export default App;
